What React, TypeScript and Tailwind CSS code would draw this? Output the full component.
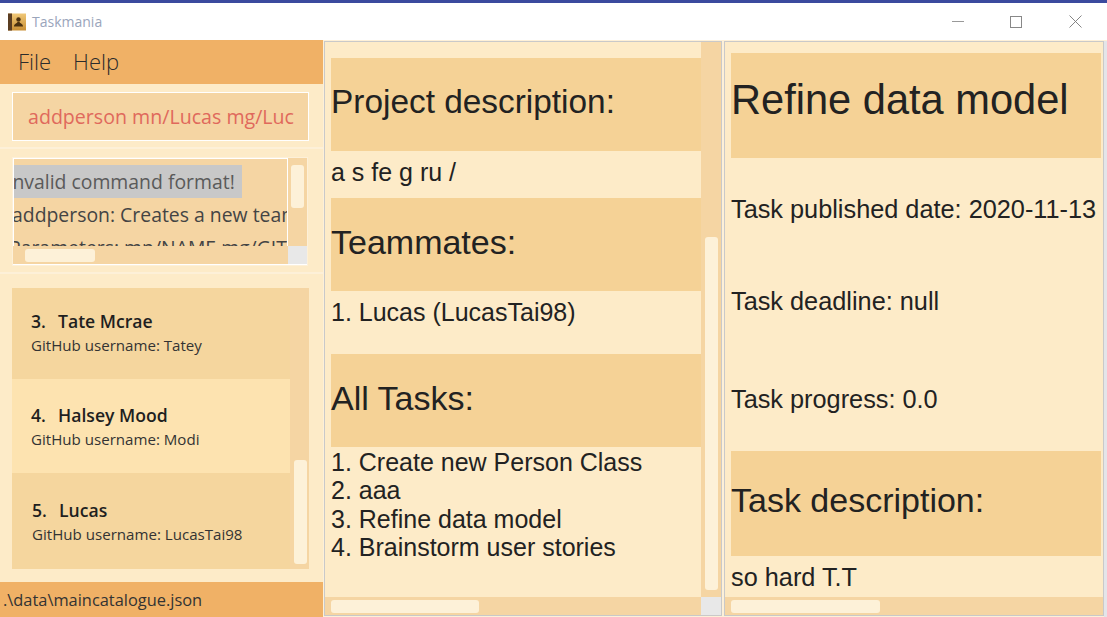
const segoe = "font-['Open_Sans',sans-serif]"
const arial = "font-['Liberation_Sans',Arial,sans-serif]"

function Heading({ children, className }: { children: string; className: string }) {
  return (
    <div className={`flex items-center bg-[#f5d296] text-[#222] leading-none whitespace-nowrap ${className}`}>
      {children}
    </div>
  )
}

function PersonCard({ n, name, user, className }: { n: string; name: string; user: string; className: string }) {
  return (
    <div className={`flex flex-col ${className}`}>
      <div className="flex text-[17.6px] leading-[24px] font-semibold text-[#1f1f1f]">
        <span className="w-[27px]">{n}.</span>
        <span>{name}</span>
      </div>
      <div className="text-[15.1px] leading-[24px] text-[#333]">GitHub username: {user}</div>
    </div>
  )
}

function TitleBar() {
  return (
    <div className="h-[37px] bg-white flex items-center pl-2 shrink-0">
      <svg width="18" height="18" viewBox="0 0 18 18">
        <defs>
          <linearGradient id="book" x1="0" y1="0" x2="0" y2="1">
            <stop offset="0" stopColor="#f0c878" />
            <stop offset="1" stopColor="#c98f35" />
          </linearGradient>
        </defs>
        <rect x="0" y="0.5" width="18" height="17" fill="url(#book)" />
        <rect x="0" y="0.5" width="4" height="17" fill="#5a3d22" />
        <circle cx="10.5" cy="6.5" r="2.2" fill="#4a3010" />
        <path d="M6 13.5 C6 10.5 9 10.5 9.5 9 L11.5 9 C12 10.5 15 10.5 15 13.5 Z" fill="#4a3010" />
      </svg>
      <span className={`ml-[6px] text-[14px] text-[#9aa5bb] ${segoe}`}>Taskmania</span>
      <div className="ml-auto flex items-center mr-[25px]">
        <div className="w-3 h-px bg-[#999]" />
        <div className="ml-[46px] w-3 h-3 border border-[#888]" />
        <svg className="ml-[47px]" width="13" height="13" viewBox="0 0 13 13">
          <path d="M0.5 0.5 L12.5 12.5 M12.5 0.5 L0.5 12.5" stroke="#777" strokeWidth="0.9" />
        </svg>
      </div>
    </div>
  )
}

function LeftPane() {
  return (
    <div className={`w-[323px] shrink-0 flex flex-col bg-[#fdebc8] ${segoe}`}>
      <div className="h-[44px] bg-[#f0b166] flex items-center pl-[18px] pb-px gap-[22px] text-[22px] text-[#2b2b2b] font-light shrink-0">
        <span>File</span>
        <span>Help</span>
      </div>
      <div className="h-[65px] pl-3 pr-[14px] pt-2 border-b-2 border-[#fdf0d8] shrink-0">
        <div className="h-[49px] bg-[#f5d5a3] border border-white flex items-center pl-[15px] pt-px text-[19.6px] text-[#e0695c] overflow-hidden whitespace-nowrap">
          addperson mn/Lucas mg/Luc
        </div>
      </div>
      <div className="h-[125px] pl-3 pr-[15px] pt-2 border-b-2 border-[#fdf0d8] shrink-0">
        <div className="h-[109px] bg-[#f5d5a3] border border-[#fdf0d8] flex flex-col overflow-hidden">
          <div className="flex-1 min-h-0 flex">
            <div className="w-[275px] h-[88px] overflow-hidden border-l border-t border-r border-white text-[19.4px] leading-[33px] text-[#444] whitespace-nowrap">
              <div className="mt-[6px] flex flex-col">
                <div className="w-[228px] h-[33px] bg-[#c8c8c8] text-[#5a5a5a] overflow-hidden">
                  <div className="-ml-[7px]">Invalid command format!</div>
                </div>
                <span className="-ml-[2px]">addperson: Creates a new team</span>
                <span className="-ml-[5px]">Parameters: mn/NAME mg/GITHUB</span>
              </div>
            </div>
            <div className="flex-1 pl-[3px] pt-[7px]">
              <div className="w-[13px] h-[43px] rounded-[3px] bg-[#fdf1d8]" />
            </div>
          </div>
          <div className="h-[19px] flex shrink-0 border-b border-white">
            <div className="w-[275px] pl-[12px] pt-[3px]">
              <div className="w-[70px] h-[13px] rounded-[3px] bg-[#fdf1d8]" />
            </div>
            <div className="flex-1 bg-[#e8e8e8]" />
          </div>
        </div>
      </div>
      <div className="h-[281px] ml-3 mr-[14px] mt-[14px] bg-[#f5d5a3] flex shrink-0">
        <div className="w-[278px] flex flex-col">
          <PersonCard n="3" name="Tate Mcrae" user="Tatey" className="h-[91px] bg-[#f5d69e] pl-[19px] pt-[21px]" />
          <PersonCard n="4" name="Halsey Mood" user="Modi" className="h-[94px] bg-[#fde3b0] pl-[19px] pt-[24px]" />
          <PersonCard n="5" name="Lucas" user="LucasTai98" className="h-[96px] bg-[#f5d69e] pl-[20px] pt-[25px]" />
        </div>
        <div className="flex-1 flex flex-col justify-end pb-[5px] pl-[4px]">
          <div className="w-[13px] h-[104px] rounded-[3px] bg-[#fdf1d8]" />
        </div>
      </div>
      <div className="mt-auto h-[35px] bg-[#f0b166] flex items-center pl-[3px] pt-[2px] text-[16.4px] text-[#333] shrink-0">
        .\data\maincatalogue.json
      </div>
    </div>
  )
}

function MiddlePane() {
  return (
    <div className={`w-[398px] ml-px mt-px mb-px shrink-0 flex flex-col bg-[#fdebc8] border border-[#c9c9c9] text-[#222] ${arial}`}>
      <div className="flex-1 min-h-0 flex">
        <div className="w-[376px] pl-[6px] pt-[16px] text-[25px] leading-[28.5px]">
          <Heading className="h-[93px] text-[33.4px] pb-[6px]">Project description:</Heading>
          <div className="h-[47px] flex items-center pb-[4px]">a s fe g ru /</div>
          <Heading className="h-[93px] text-[34px] pb-[6px]">Teammates:</Heading>
          <div className="h-[63px] pt-[7px]">1. Lucas (LucasTai98)</div>
          <Heading className="h-[93px] text-[34px] pb-[6px]">All Tasks:</Heading>
          <div className="pt-[0.5px]">
            <div>1. Create new Person Class</div>
            <div>2. aaa</div>
            <div>3. Refine data model</div>
            <div>4. Brainstorm user stories</div>
          </div>
        </div>
        <div className="flex-1 bg-[#f5d5a3] flex flex-col justify-end pb-[7px] pl-[4px]">
          <div className="w-[13px] h-[353px] rounded-[3px] bg-[#fdf1d8]" />
        </div>
      </div>
      <div className="h-[18px] flex shrink-0">
        <div className="w-[376px] bg-[#f5d5a3] pl-[6px] pt-[3px]">
          <div className="w-[148px] h-[13px] rounded-[3px] bg-[#fdf1d8]" />
        </div>
        <div className="flex-1 bg-[#e8e8e8]" />
      </div>
    </div>
  )
}

function RightPane() {
  return (
    <div className={`w-[380px] ml-[2px] mt-px mb-px shrink-0 flex flex-col bg-[#fdebc8] border border-[#c9c9c9] text-[#222] ${arial}`}>
      <div className="flex-1 min-h-0 pl-[6px] pr-[2px] pt-[11px] text-[25.3px]">
        <Heading className="h-[105px] text-[41.6px] pb-[12px]">Refine data model</Heading>
        <div className="h-[98px] pt-[35px] leading-[32px]">Task published date: 2020-11-13</div>
        <div className="h-[98px] pt-[29px] leading-[32px]">Task deadline: null</div>
        <div className="h-[97px] pt-[29px] leading-[32px]">Task progress: 0.0</div>
        <Heading className="h-[105px] text-[34px] pb-[8px]">Task description:</Heading>
        <div className="pt-[5px] leading-[32px]">so hard T.T</div>
      </div>
      <div className="h-[18px] bg-[#f5d5a3] pl-[6px] pt-[3px] shrink-0">
        <div className="w-[149px] h-[13px] rounded-[3px] bg-[#fdf1d8]" />
      </div>
    </div>
  )
}

export default function App() {
  return (
    <div className="w-[1107px] h-[617px] overflow-hidden flex flex-col bg-white">
      <div className="h-[3px] bg-[#3b4a9e] shrink-0" />
      <TitleBar />
      <div className="flex-1 min-h-0 flex bg-[#fdf0d8]">
        <LeftPane />
        <MiddlePane />
        <RightPane />
        <div className="flex-1 mt-px bg-[#e4e5e9]" />
      </div>
    </div>
  )
}
